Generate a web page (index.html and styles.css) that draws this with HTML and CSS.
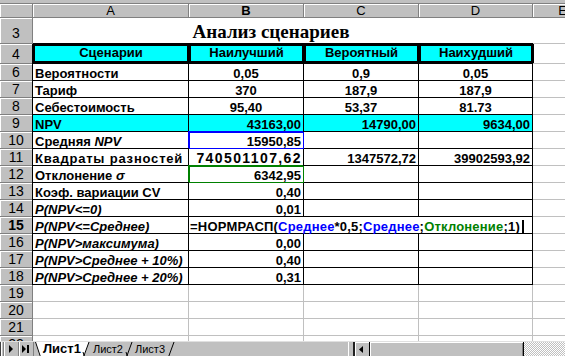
FILE: index.html
```html
<!DOCTYPE html>
<html lang="ru">
<head>
<meta charset="utf-8">
<title>Анализ сценариев</title>
<link rel="stylesheet" href="styles.css">
</head>
<body>
<div class="app">
  <div class="topstrip"></div>
  <div class="sheet">
    <div class="corner"></div>
    <div class="ch">A</div><div class="ch act">B</div><div class="ch">C</div><div class="ch">D</div><div class="ch">E</div>

    <div class="rh rh3">3</div>
    <div class="title">Анализ сценариев</div>
    <div class="c e"></div>

    <div class="rh rh4">4</div>
    <div class="hd">Сценарии</div><div class="hd">Наилучший</div><div class="hd">Вероятный</div><div class="hd">Наихудший</div>
    <div class="c e"></div>

    <div class="rh">6</div>
    <div class="c t a">Вероятности</div><div class="c t m">0,05</div><div class="c t m">0,9</div><div class="c t m">0,05</div><div class="c e"></div>

    <div class="rh">7</div>
    <div class="c t a">Тариф</div><div class="c t m">370</div><div class="c t m">187,9</div><div class="c t m">187,9</div><div class="c e"></div>

    <div class="rh">8</div>
    <div class="c t a">Себестоимость</div><div class="c t m">95,40</div><div class="c t m">53,37</div><div class="c t m">81.73</div><div class="c e"></div>

    <div class="rh">9</div>
    <div class="c t a cy">NPV</div><div class="c t r cy">43163,00</div><div class="c t r cy">14790,00</div><div class="c t r cy">9634,00</div><div class="c e"></div>

    <div class="rh">10</div>
    <div class="c t a">Средняя <i>NPV</i></div><div class="c t r ref-blue">15950,85</div><div class="c t"></div><div class="c t"></div><div class="c e"></div>

    <div class="rh">11</div>
    <div class="c t a wide">Квадраты разностей</div><div class="c t r wider">740501107,62</div><div class="c t r">1347572,72</div><div class="c t r">39902593,92</div><div class="c e"></div>

    <div class="rh">12</div>
    <div class="c t a">Отклонение <i>σ</i></div><div class="c t r ref-green">6342,95</div><div class="c t"></div><div class="c t"></div><div class="c e"></div>

    <div class="rh">13</div>
    <div class="c t a">Коэф. вариации CV</div><div class="c t r">0,40</div><div class="c t"></div><div class="c t"></div><div class="c e"></div>

    <div class="rh">14</div>
    <div class="c t a i">P(NPV&lt;=0)</div><div class="c t r">0,01</div><div class="c t"></div><div class="c t"></div><div class="c e"></div>

    <div class="rh act">15</div>
    <div class="c t a i">P(NPV&lt;=Среднее)</div>
    <div class="c t edit">=НОРМРАСП(<span class="fb">Среднее</span>*0,5;<span class="fb">Среднее</span>;<span class="fg">Отклонение</span>;1)<span class="caret"></span></div>
    <div class="c e"></div>

    <div class="rh">16</div>
    <div class="c t a i">P(NPV&gt;максимума)</div><div class="c t r">0,00</div><div class="c t"></div><div class="c t"></div><div class="c e"></div>

    <div class="rh">17</div>
    <div class="c t a i">P(NPV&gt;Среднее + 10%)</div><div class="c t r">0,40</div><div class="c t"></div><div class="c t"></div><div class="c e"></div>

    <div class="rh">18</div>
    <div class="c t a i">P(NPV&gt;Среднее + 20%)</div><div class="c t r">0,31</div><div class="c t"></div><div class="c t"></div><div class="c e"></div>

    <div class="rh">19</div>
    <div class="c"></div><div class="c"></div><div class="c"></div><div class="c"></div><div class="c e"></div>
    <div class="rh">20</div>
    <div class="c"></div><div class="c"></div><div class="c"></div><div class="c"></div><div class="c e"></div>
    <div class="rh">21</div>
    <div class="c"></div><div class="c"></div><div class="c"></div><div class="c"></div><div class="c e"></div>
    <div class="rh">22</div>
    <div class="c"></div><div class="c"></div><div class="c"></div><div class="c"></div><div class="c e"></div>
  </div>

  <div class="tabbar">
    <div class="nav">
      <span class="nb edge"></span>
      <span class="nb"><svg width="14" height="14" viewBox="0 0 14 14"><path d="M5 3v8l4-4z"/></svg></span>
      <span class="nb"><svg width="14" height="14" viewBox="0 0 14 14"><path d="M3 3v8l4-4z M8 3h2v8h-2z"/></svg></span>
    </div>
    <div class="tabs">
      <svg class="slant" width="7" height="15" viewBox="0 0 7 15"><polygon points="0,0 7,0 7,15 5,15" fill="#fff"/><path d="M0.5 0 L5.5 15" stroke="#000" fill="none"/></svg>
      <span class="tab active">Лист1</span>
      <svg class="slant" width="10" height="15" viewBox="0 0 10 15"><polygon points="0,0 7,0 2,15 0,15" fill="#fff"/><path d="M1.5 15 L7 0 M1 10 L2.5 15" stroke="#000" fill="none"/></svg>
      <span class="tab">Лист2</span>
      <svg class="slant" width="10" height="15" viewBox="0 0 10 15"><path d="M2.5 15 L8 0 M2 10 L3.5 15" stroke="#000" fill="none"/></svg>
      <span class="tab">Лист3</span>
      <svg class="slant" width="10" height="15" viewBox="0 0 10 15"><path d="M2.5 15 L8 0" stroke="#000" fill="none"/></svg>
    </div>
    <div class="split"></div>
    <div class="sbtn"><svg width="13" height="13" viewBox="0 0 13 13"><path d="M7 3v7l-4-3.5z"/></svg></div>
    <div class="thumb"></div>
    <div class="track"></div>
  </div>
</div>
</body>
</html>
```

FILE: styles.css
```css
* { box-sizing: border-box; margin: 0; padding: 0; }
html, body { width: 565px; height: 356px; overflow: hidden; background: #c0c0c0; }
body { font-family: "Liberation Sans", Arial, sans-serif; color: #000; }

.app { width: 565px; height: 356px; display: flex; flex-direction: column; }

.topstrip { height: 4px; background: #c0c0c0; border-bottom: 1px solid #808080; flex: none; }

.sheet {
  width: 565px;
  height: 337px;
  flex: none;
  overflow: hidden;
  background: #fff;
  display: grid;
  grid-template-columns: 33px 156px 115px 115px 114px 60px;
  grid-template-rows: 14px 26px 20px repeat(17, 17px);
}

.corner, .ch, .rh {
  background: #c0c0c0;
  border-right: 1px solid #808080;
  border-bottom: 1px solid #808080;
  box-shadow: inset 1px 1px 0 #fff;
  font-weight: normal;
}
.ch { text-align: center; font-size: 13px; line-height: 13px; }
.rh { text-align: center; font-size: 14px; line-height: 15px; padding-top: 1px; }
.rh3 { padding-top: 8px; }
.rh4 { padding-top: 3px; }
.act { font-weight: bold; }

.title {
  grid-column: span 4;
  display: flex;
  align-items: flex-end;
  justify-content: center;
  padding: 0 24px 3px 0;
  font-family: "Liberation Serif", "Times New Roman", serif;
  font-weight: bold;
  font-size: 19px;
  line-height: 19px;
  white-space: nowrap;
}

.hd {
  background: #00ffff;
  border: 2px solid #000;
  border-bottom-width: 3px;
  box-shadow: 0 -1px 0 #000, -1px 0 0 #000, 1px 0 0 #000;
  text-align: center;
  font-weight: bold;
  font-size: 13px;
  line-height: 13px;
  white-space: nowrap;
}

.c {
  border-right: 1px solid #c0c0c0;
  border-bottom: 1px solid #c0c0c0;
  padding: 2px 2px 0;
  font-weight: bold;
  font-size: 13px;
  line-height: 15px;
  white-space: nowrap;
}
.c.e { border-right: 0; }
.c.t { border-right-color: #000; border-bottom-color: #000; }
.c.a { box-shadow: -1px 0 0 #000; }
.c.m { text-align: center; }
.c.r { text-align: right; }
.c.i { font-style: italic; }
.c.wide { letter-spacing: 0.8px; }
.c.wider { font-size: 14px; letter-spacing: 1.4px; padding-right: 1px; }
.cy { background: #00ffff; }

.ref-blue {
  border-right-color: #0000ff !important;
  border-bottom-color: #0000ff !important;
  box-shadow: inset 1px 1px 0 #0000ff, -1px -1px 0 #0000ff;
}
.ref-green {
  border-right-color: #008000 !important;
  border-bottom-color: #008000 !important;
  box-shadow: inset 1px 1px 0 #008000, -1px -1px 0 #008000;
}

.edit {
  grid-column: span 3;
  background: #fff;
  padding-left: 1px;
  letter-spacing: 0.2px;
}
.fb { color: #0000ff; }
.fg { color: #008000; }
.caret {
  display: inline-block;
  width: 2px;
  height: 14px;
  margin-left: 2px;
  background: #000;
  vertical-align: -3px;
}

.tabbar {
  height: 15px;
  flex: none;
  display: flex;
  background: #c0c0c0;
  border-top: 1px solid #e0e0e0;
}
.nav { width: 35px; display: flex; flex: none; }
.nb {
  width: 15px;
  height: 14px;
  border-right: 1px solid #808080;
  box-shadow: inset 1px 0 0 #fff;
  display: flex;
  align-items: center;
  justify-content: center;
}
.nb.edge { width: 4px; border-left: 1px solid #404040; }
.nb svg { display: block; }

.tabs {
  width: 313px;
  flex: none;
  display: flex;
  align-items: stretch;
  font-size: 11px;
  line-height: 14px;
}
.slant { display: block; flex: none; }
.tab { padding: 0 1px; white-space: nowrap; }
.tab.active { background: #fff; font-weight: bold; font-size: 13px; }

.split {
  width: 7px;
  flex: none;
  border-left: 1px solid #fff;
  border-right: 2px solid #202020;
}
.sbtn {
  width: 15px;
  flex: none;
  border-right: 1px solid #000;
  box-shadow: inset 1px 1px 0 #fff;
  display: flex;
  align-items: center;
  justify-content: center;
}
.sbtn svg { display: block; }
.thumb {
  width: 154px;
  flex: none;
  border-right: 1px solid #000;
  box-shadow: inset 1px 1px 0 #fff, inset -1px 0 0 #808080;
}
.track {
  flex: 1;
  background: repeating-conic-gradient(#c0c0c0 0 25%, #fff 0 50%) 0 0 / 2px 2px;
}
```
